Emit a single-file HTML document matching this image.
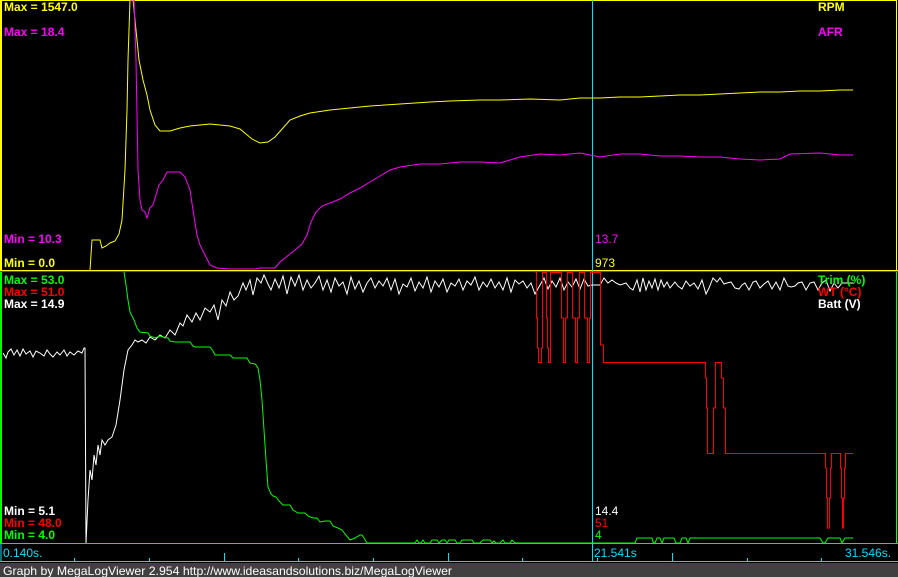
<!DOCTYPE html>
<html><head><meta charset="utf-8"><style>
html,body{margin:0;padding:0;background:#000;width:898px;height:577px;overflow:hidden}
svg{display:block}
text{font-family:"Liberation Sans",sans-serif;font-size:12px;font-weight:bold}
.n{font-weight:normal}
</style></head><body>
<svg width="898" height="577" viewBox="0 0 898 577" xmlns="http://www.w3.org/2000/svg" shape-rendering="crispEdges">
<rect width="898" height="577" fill="#000"/>
<line x1="0" y1="0.5" x2="897" y2="0.5" stroke="#ffff00"/>
<line x1="1" y1="0" x2="1" y2="271" stroke="#ffff00" stroke-width="2"/>
<line x1="896.5" y1="0" x2="896.5" y2="271" stroke="#ffff00"/>
<line x1="0" y1="270.5" x2="898" y2="270.5" stroke="#ffff00"/>
<line x1="0" y1="271.5" x2="898" y2="271.5" stroke="#ff0000"/>
<line x1="1" y1="272" x2="1" y2="543" stroke="#00ff00" stroke-width="2"/>
<line x1="896.5" y1="272" x2="896.5" y2="543" stroke="#00ff00"/>
<line x1="0" y1="543.5" x2="898" y2="543.5" stroke="#00ff00"/>
<line x1="0" y1="561.5" x2="898" y2="561.5" stroke="#00e0ff"/>
<line x1="1" y1="544" x2="1" y2="562" stroke="#00e0ff"/>
<g stroke="#00e0ff">
<line x1="74.5" y1="558" x2="74.5" y2="561"/><line x1="149.5" y1="558" x2="149.5" y2="561"/>
<line x1="224.5" y1="553" x2="224.5" y2="561"/><line x1="298.5" y1="558" x2="298.5" y2="561"/>
<line x1="373.5" y1="558" x2="373.5" y2="561"/><line x1="448.5" y1="553" x2="448.5" y2="561"/>
<line x1="522.5" y1="558" x2="522.5" y2="561"/><line x1="597.5" y1="558" x2="597.5" y2="561"/>
<line x1="672.5" y1="553" x2="672.5" y2="561"/><line x1="747.5" y1="558" x2="747.5" y2="561"/>
<line x1="821.5" y1="558" x2="821.5" y2="561"/>
</g>
<line x1="592.5" y1="0" x2="592.5" y2="562" stroke="#00e0ff"/>
<g fill="none" shape-rendering="auto" stroke-width="1">
<polyline stroke="#ffff00" points="90,270 92,240 100,240 102,248 106,246 110,243 115,241 119,234 122,220 125,170 127,110 128,60 130,0 133,0 136,30 139,60 143,80 147,95 150,110 155,125 160,131 170,131 180,128 190,126 200,125 210,124 220,125 230,126 240,129 246,134 252,139 260,143 268,142 275,137 283,128 290,120 300,116 310,113 330,110 350,108 370,106 400,104 430,102 450,101 480,100 500,100 530,99 560,100 580,98 600,98 620,97 640,97 660,96 680,95 700,95 720,94 740,93 760,92 780,92 800,91 820,91 840,90 853,90"/>
<polyline stroke="#ff00ff" points="130,0 134,0 136,60 138,170 140,200 142,210 145,212 147,218 150,208 153,205 156,195 159,185 163,180 167,172 180,172 185,177 190,190 193,210 197,235 200,245 205,255 210,265 217,268 230,269 255,269 260,268 275,268 280,262 285,258 290,254 295,250 302,244 307,235 311,222 316,212 322,206 330,203 340,199 350,193 360,188 370,182 380,176 390,170 400,167 420,164 440,164 460,162 480,162 500,163 520,157 540,154 560,155 580,153 600,157 620,154 640,154 660,156 680,156 700,157 720,157 740,159 760,160 780,159 790,154 820,153 840,155 853,155"/>
<polyline stroke="#ffffff" points="3,353 6,358 8,352 11,349 14,355 17,350 20,356 23,349 26,354 30,351 33,357 36,351 40,353 44,356 47,350 50,354 53,357 57,352 60,355 64,350 67,356 70,352 74,355 78,351 82,353 84,348 85,348 86,543 88,500 90,470 92,480 94,455 96,465 98,445 100,455 102,440 105,445 108,440 112,437 116,425 120,400 124,370 128,350 132,345 135,340 138,342 142,340 146,343 150,337 155,340 160,335 165,338 170,330 175,335 180,323 183,326 187,315 192,322 196,313 200,320 205,308 210,312 214,305 218,320 222,300 226,306 230,292 234,300 238,296 243,283 246,290 250,280 253,295 257,278 261,283 264,275 268,284 271,290 275,279 279,288 283,276 287,294 291,277 295,286 299,275 303,290 307,280 311,288 315,283 319,276 323,290 327,280 331,292 335,278 339,286 343,282 347,294 351,277 355,289 359,281 363,292 367,283 371,278 375,288 379,281 383,286 387,278 391,290 395,279 399,294 403,284 407,287 411,278 415,291 419,282 423,288 427,277 431,292 435,281 439,287 443,279 447,292 451,283 455,286 459,279 463,290 467,281 471,285 475,277 479,290 483,282 487,287 491,279 495,288 499,282 503,290 507,278 511,292 515,280 519,284 523,281 527,288 531,283 535,294 540,285 544,278 548,289 552,281 556,287 560,278 564,290 568,282 572,287 576,279 580,289 584,279 588,286 592,285 600,285 604,278 608,283 612,280 616,283 620,285 626,283 630,288 633,290 637,280 640,292 643,278 646,290 649,281 652,288 655,279 658,290 661,280 664,287 667,282 670,288 675,282 678,286 682,289 686,281 690,286 694,283 698,289 702,280 706,294 709,288 713,278 717,282 720,278 724,284 727,283 731,282 735,288 739,289 742,285 745,283 749,290 753,282 756,281 760,288 764,284 768,281 772,289 776,282 780,290 784,278 788,286 791,287 795,286 798,283 802,282 806,290 810,283 814,282 818,290 822,283 826,280 830,291 834,283 838,288 842,283 846,283 850,283 853,283"/>
<polyline stroke="#00ff00" points="124,272 126,285 128,300 130,312 134,320 137,328 140,332 148,333 150,336 155,338 160,336 163,337 168,338 170,341 175,342 190,342 193,346 195,347 210,347 213,351 215,355 230,355 233,358 247,358 250,363 255,364 256,365 258,368 260,380 262,400 264,430 266,460 268,487 271,494 273,496 276,497 280,502 283,505 290,505 293,510 298,513 305,513 308,516 313,518 317,518 320,522 325,521 330,521 333,526 338,528 342,530 345,534 350,540 355,538 360,535 362,535 364,538 367,543 380,543 383,543 415,543 417,540 419,543 421,543 423,540 425,543 430,543 432,540 437,540 439,543 442,540 445,540 447,543 449,540 455,540 457,543 460,543 462,540 472,540 474,543 480,543 483,540 490,540 492,543 494,541 496,543 500,543 503,540 505,543 510,543 512,540 515,543 600,543 635,543 637,538 652,538 653,542 655,543 657,538 660,538 662,543 664,538 674,538 676,543 680,543 682,538 686,538 688,543 690,538 820,538 823,543 825,543 828,538 840,538 842,543 845,538 853,538"/>
</g>
<g fill="none" stroke="#ff0000" stroke-width="1" shape-rendering="crispEdges">
<polyline points="535.5,272.5 536.5,272.5 536.5,318 537.5,318 537.5,348 538.5,348 538.5,362.5 541.5,362.5 541.5,348 542.5,348 542.5,272.5 546.5,272.5 546.5,318 547.5,318 547.5,348 548.5,348 548.5,362.5 550.5,362.5 550.5,272.5 561.5,272.5 561.5,318 563.5,318 563.5,362.5 565.5,362.5 565.5,318 567.5,318 567.5,272.5 572.5,272.5 572.5,318 575.5,318 575.5,362.5 577.5,362.5 577.5,318 579.5,318 579.5,272.5 584.5,272.5 584.5,318 587.5,318 587.5,362.5 589.5,362.5 589.5,318 590.5,318 590.5,272.5 600.5,272.5 600.5,345 603.5,345 603.5,362.5 705.5,362.5 705.5,378 706.5,378 706.5,408 707.5,408 707.5,453.5 713.5,453.5 713.5,408 715.5,408 715.5,362.5 721.5,362.5 721.5,378 723.5,378 723.5,408 725.5,408 725.5,453.5 825.5,453.5 825.5,468 826.5,468 826.5,498 827.5,498 827.5,528 829.5,528 829.5,498 830.5,498 830.5,468 831.5,468 831.5,453.5 840.5,453.5 840.5,468 841.5,468 841.5,498 842.5,498 842.5,528 843.5,528 843.5,498 844.5,498 844.5,468 845.5,468 845.5,453.5 853,453.5"/>
</g>
<text x="4" y="11" fill="#ffff00">Max = 1547.0</text>
<text x="4" y="36" fill="#ff00ff">Max = 18.4</text>
<text x="818" y="11" fill="#ffff00">RPM</text>
<text x="818" y="36" fill="#ff00ff">AFR</text>
<text x="4" y="243" fill="#ff00ff">Min = 10.3</text>
<text x="4" y="267" fill="#ffff00">Min = 0.0</text>
<text x="595" y="243" fill="#ff00ff" class="n">13.7</text>
<text x="595" y="267" fill="#ffff00" class="n">973</text>
<text x="4" y="284" fill="#00ff00">Max = 53.0</text>
<text x="4" y="296" fill="#ff0000">Max = 51.0</text>
<text x="4" y="308" fill="#ffffff">Max = 14.9</text>
<text x="818" y="284" fill="#00ff00">Trim (%)</text>
<text x="818" y="296" fill="#ff0000">WT (°C)</text>
<text x="818" y="308" fill="#ffffff">Batt (V)</text>
<text x="4" y="515" fill="#ffffff">Min = 5.1</text>
<text x="4" y="527" fill="#ff0000">Min = 48.0</text>
<text x="4" y="539" fill="#00ff00">Min = 4.0</text>
<text x="595" y="515" fill="#ffffff" class="n">14.4</text>
<text x="595" y="527" fill="#ff0000" class="n">51</text>
<text x="595" y="539" fill="#00ff00" class="n">4</text>
<text x="3" y="557" fill="#00e0ff" class="n">0.140s.</text>
<text x="594" y="557" fill="#00e0ff" class="n">21.541s</text>
<text x="845" y="557" fill="#00e0ff" class="n">31.546s.</text>
<rect x="0" y="563" width="898" height="14" fill="#404040"/>
<text x="3" y="575" fill="#ffffff" class="n" textLength="449" lengthAdjust="spacingAndGlyphs">Graph by MegaLogViewer 2.954 http://www.ideasandsolutions.biz/MegaLogViewer</text>
</svg>
</body></html>
